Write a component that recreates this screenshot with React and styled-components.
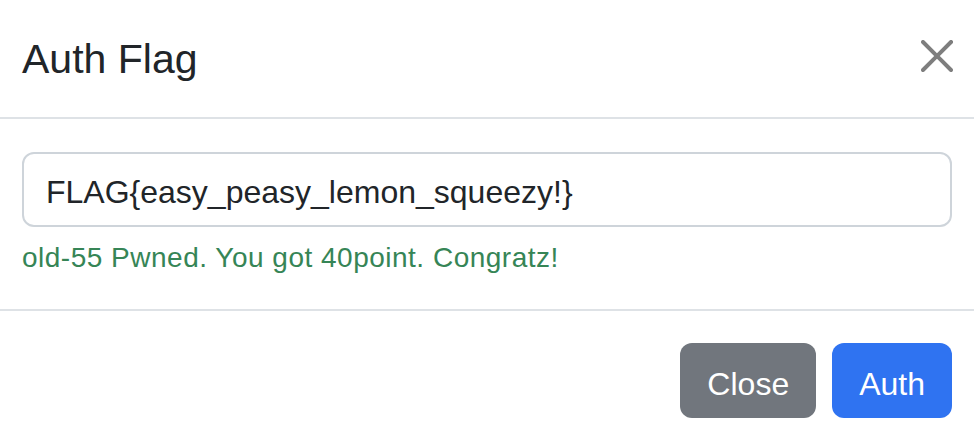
import React, { useState } from 'react';
import styled, { createGlobalStyle } from 'styled-components';

const GlobalStyle = createGlobalStyle`
  html, body {
    margin: 0;
    padding: 0;
    background: #ffffff;
  }
  body {
    font-family: "Liberation Sans", Arial, sans-serif;
    color: #212529;
  }
`;

const Modal = styled.div`
  width: 974px;
  height: 448px;
  display: flex;
  flex-direction: column;
  background: #ffffff;
`;

// 헤더
const Header = styled.div`
  height: 117px;
  display: flex;
  align-items: center;
  justify-content: space-between;
  padding: 0 21px 0 22px;
  border-bottom: 2px solid #dee2e6;
`;

const Title = styled.h5`
  margin: 0;
  font-size: 41px;
  font-weight: 400;
  line-height: 48px;
  color: #212529;
`;

const CloseX = styled.button`
  width: 32px;
  height: 32px;
  margin-top: -5px;
  padding: 0;
  border: none;
  background: transparent;
  cursor: pointer;
  opacity: 0.5;
  display: flex;
  align-items: center;
  justify-content: center;
`;

const Body = styled.div`
  padding: 33px 22px 31px;
  display: flex;
  flex-direction: column;
`;

const FlagInput = styled.input`
  box-sizing: border-box;
  width: 100%;
  height: 75px;
  padding: 6px 22px 0;
  border: 2px solid #ced4da;
  border-radius: 12px;
  font-family: "Liberation Sans", Arial, sans-serif;
  font-size: 32px;
  color: #212529;
  outline: none;
`;

const Feedback = styled.div`
  margin-top: 11px;
  font-size: 28px;
  line-height: 40px;
  letter-spacing: 0.5px;
  color: #368556;
`;

const Footer = styled.div`
  flex: 1;
  display: flex;
  justify-content: flex-end;
  align-items: flex-start;
  gap: 16px;
  padding: 32px 22px 0;
  border-top: 2px solid #dee2e6;
`;

const Button = styled.button`
  height: 75px;
  padding: 8px 27px 0;
  border: none;
  border-radius: 12px;
  font-family: "Liberation Sans", Arial, sans-serif;
  font-size: 32px;
  color: #ffffff;
  cursor: pointer;
  background: ${props => props.variant === 'primary' ? '#2f73f1' : '#71767d'};
`;

const App = () => {
  const [flag, setFlag] = useState('FLAG{easy_peasy_lemon_squeezy!}');

  return (
    <>
      <GlobalStyle />
      <Modal>
        <Header>
          <Title>Auth Flag</Title>
          <CloseX aria-label="Close">
            <svg width="32" height="32" viewBox="0 0 16 16" fill="#000">
              <path d="M.293.293a1 1 0 0 1 1.414 0L8 6.586 14.293.293a1 1 0 1 1 1.414 1.414L9.414 8l6.293 6.293a1 1 0 0 1-1.414 1.414L8 9.414l-6.293 6.293a1 1 0 0 1-1.414-1.414L6.586 8 .293 1.707a1 1 0 0 1 0-1.414z" />
            </svg>
          </CloseX>
        </Header>
        <Body>
          <FlagInput value={flag} onChange={e => setFlag(e.target.value)} />
          <Feedback>old-55 Pwned. You got 40point. Congratz!</Feedback>
        </Body>
        <Footer>
          <Button>Close</Button>
          <Button variant="primary">Auth</Button>
        </Footer>
      </Modal>
    </>
  );
};

export default App;
